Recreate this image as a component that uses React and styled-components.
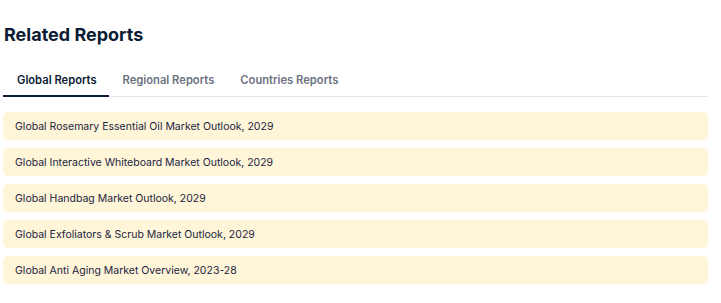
import React, { useState } from "react";
import styled, { createGlobalStyle } from "styled-components";

const GlobalStyle = createGlobalStyle`
    body {
        margin: 0;
        background: #ffffff;
        font-family: Inter, "Noto Sans", sans-serif;
    }
`;

const Wrapper = styled.div`
    width: 705px;
    padding: 22px 0 0 3px;
`;

const Title = styled.h2`
    margin: 0 0 0 1px;
    font-size: 18px;
    font-weight: 700;
    line-height: 26px;
    color: #0b1c34;
`;

const TabBar = styled.div`
    display: flex;
    margin-top: 16px;
    border-bottom: 1px solid #e3e5e8;
`;

const Tab = styled.div`
    padding: 9px 12px 8px 14px;
    margin-bottom: -1px;
    font-size: 11.2px;
    font-weight: 600;
    line-height: 14px;
    color: ${({ active }) => (active ? "#0b1c34" : "#6b7280")};
    border-bottom: 2px solid ${({ active }) => (active ? "#0b1c34" : "transparent")};
    cursor: pointer;
`;

const List = styled.div`
    display: flex;
    flex-direction: column;
    gap: 8px;
    margin-top: 15px;
`;

const Row = styled.div`
    height: 28px;
    display: flex;
    align-items: center;
    padding: 0 12px;
    background: #fff5d8;
    border-radius: 5px;
    font-size: 10.5px;
    color: #1b2441;
`;

const reports = [
    "Global Rosemary Essential Oil Market Outlook, 2029",
    "Global Interactive Whiteboard Market Outlook, 2029",
    "Global Handbag Market Outlook, 2029",
    "Global Exfoliators & Scrub Market Outlook, 2029",
    "Global Anti Aging Market Overview, 2023-28",
];

const tabs = ["Global Reports", "Regional Reports", "Countries Reports"];

const App = () => {
    const [tab, setTab] = useState(0);

    return (
        <Wrapper>
            <GlobalStyle />
            <Title>Related Reports</Title>
            <TabBar>
                {tabs.map((t, i) => (
                    <Tab key={t} active={i === tab} onClick={() => setTab(i)}>
                        {t}
                    </Tab>
                ))}
            </TabBar>
            <List>
                {reports.map((r) => (
                    <Row key={r}>{r}</Row>
                ))}
            </List>
        </Wrapper>
    );
};

export default App;
